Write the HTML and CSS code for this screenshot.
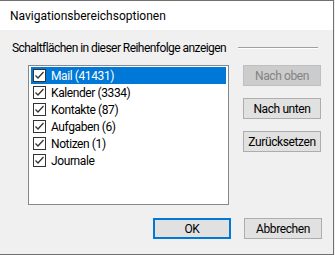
FILE: index.html
```html
<!DOCTYPE html>
<html lang="de">
<head>
    <meta charset="UTF-8">
    <title>Navigationsbereichsoptionen</title>
    <link rel="stylesheet" href="styles.css">
</head>
<body>
    <div class="dialog">
        <div class="titlebar">Navigationsbereichsoptionen</div>
        <div class="content">
            <div class="group-label">
                <span>Schaltflächen in dieser Reihenfolge anzeigen</span>
                <div class="group-line"></div>
            </div>
            <div class="main">
                <ul class="list">
                    <li class="item selected"><span class="check"><svg width="11" height="11" viewBox="0 0 11 11"><polyline points="1.5,5.5 4,8 9.5,2" /></svg></span>Mail (41431)</li>
                    <li class="item"><span class="check"><svg width="11" height="11" viewBox="0 0 11 11"><polyline points="1.5,5.5 4,8 9.5,2" /></svg></span>Kalender (3334)</li>
                    <li class="item"><span class="check"><svg width="11" height="11" viewBox="0 0 11 11"><polyline points="1.5,5.5 4,8 9.5,2" /></svg></span>Kontakte (87)</li>
                    <li class="item"><span class="check"><svg width="11" height="11" viewBox="0 0 11 11"><polyline points="1.5,5.5 4,8 9.5,2" /></svg></span>Aufgaben (6)</li>
                    <li class="item"><span class="check"><svg width="11" height="11" viewBox="0 0 11 11"><polyline points="1.5,5.5 4,8 9.5,2" /></svg></span>Notizen (1)</li>
                    <li class="item"><span class="check"><svg width="11" height="11" viewBox="0 0 11 11"><polyline points="1.5,5.5 4,8 9.5,2" /></svg></span>Journale</li>
                </ul>
                <div class="side-buttons">
                    <button class="btn" disabled>Nach oben</button>
                    <button class="btn">Nach unten</button>
                    <button class="btn">Zurücksetzen</button>
                </div>
            </div>
        </div>
        <div class="footer">
            <button class="btn default">OK</button>
            <button class="btn">Abbrechen</button>
        </div>
    </div>
</body>
</html>
```

FILE: styles.css
```css
body {
    margin: 0;
    background-color: #f0f0f0;
    font-family: Roboto, Arial, sans-serif;
    font-size: 12px;
    color: #000000;
}
.dialog {
    width: 333px;
    height: 253px;
    background-color: #f0f0f0;
    border-top: 1px solid #707070;
    border-right: 1px solid #707070;
    border-bottom: 1px solid #707070;
}
.titlebar {
    height: 29px;
    line-height: 30px;
    padding-left: 10px;
    background-color: #ffffff;
}
.content,
.footer {
    letter-spacing: -0.4px;
}
.content {
    padding: 10px 12px 0 12px;
}
.group-label {
    display: flex;
    align-items: center;
    height: 16px;
    letter-spacing: -0.55px;
}
.group-line {
    flex: 1;
    height: 0;
    border-top: 1px solid #a0a0a0;
    border-bottom: 1px solid #ffffff;
    margin-left: 12px;
    margin-right: 3px;
}
.main {
    display: flex;
    margin-top: 9px;
    margin-left: 16px;
}
.list {
    list-style: none;
    margin: 0;
    padding: 1px 2px;
    width: 196px;
    height: 136px;
    background-color: #ffffff;
    border: 1px solid #828790;
}
.item {
    display: flex;
    align-items: center;
    height: 17px;
    padding-left: 2px;
}
.item.selected {
    background-color: #0078d7;
    color: #ffffff;
}
.check {
    display: flex;
    align-items: center;
    justify-content: center;
    width: 11px;
    height: 11px;
    margin-right: 5px;
    background-color: #ffffff;
    border: 1px solid #333333;
}
.check polyline {
    fill: none;
    stroke: #333333;
    stroke-width: 1.3;
}
.side-buttons {
    display: flex;
    flex-direction: column;
    gap: 12px;
    margin-left: 14px;
}
.btn {
    width: 78px;
    height: 21px;
    padding: 0;
    font-family: inherit;
    font-size: 12px;
    letter-spacing: inherit;
    color: #000000;
    background-color: #e1e1e1;
    border: 1px solid #adadad;
}
.btn:disabled {
    color: #838383;
    background-color: #cccccc;
    border-color: #bfbfbf;
}
.btn.default {
    border: 2px solid #0078d7;
}
.footer {
    display: flex;
    justify-content: flex-end;
    gap: 13px;
    margin-top: 13px;
    padding-right: 11px;
}
```
